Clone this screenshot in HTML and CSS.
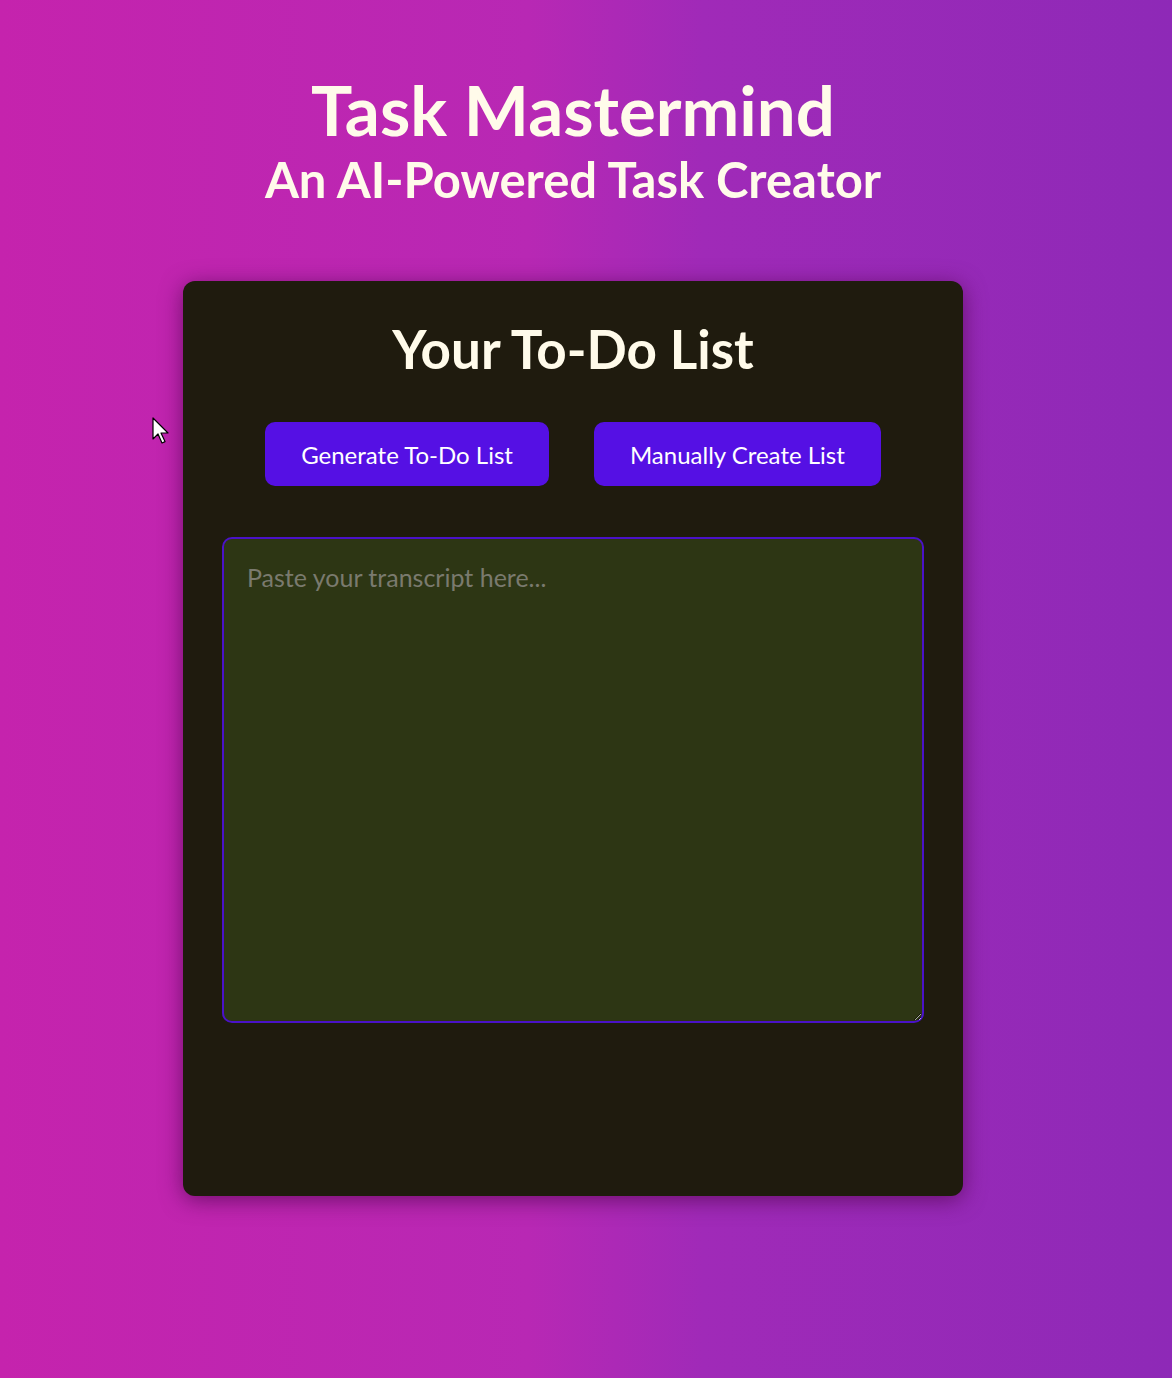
FILE: index.html
```html
<!DOCTYPE html>
<html lang="en">
<head>
    <meta charset="UTF-8">
    <meta name="viewport" content="width=device-width, initial-scale=1.0">
    <link rel="stylesheet" href="styles.css">
    <title>Task Mastermind</title>
</head>
<body>

    <header class="header">
        <h1>Task Mastermind</h1>
        <h2>An AI-Powered Task Creator</h2>
    </header>

    <div class="card">
        <h3>Your To-Do List</h3>

        <div class="actions">
            <button>Generate To-Do List</button>
            <button>Manually Create List</button>
        </div>

        <textarea placeholder="Paste your transcript here..."></textarea>
    </div>

    <svg class="cursor" width="18" height="28" viewBox="0 0 18 28">
        <path d="M1 1 L1 22 L6 17 L10 26 L13 24.6 L9 16 L16 16 Z" fill="#fff" stroke="#000" stroke-width="1.2" stroke-linejoin="round"/>
    </svg>

</body>
</html>
```

FILE: styles.css
```css
body {
    box-sizing: border-box;
    margin: 0;
    padding-right: 26px;
    min-height: 1378px;
    display: flex;
    flex-direction: column;
    align-items: center;
    font-family: 'Lato', 'DejaVu Sans', sans-serif;
    background: linear-gradient(90deg, #c523ad 0%, #b828b4 45%, #a02ab8 60%, #8e29b7 100%);
    color: #fff;
    position: relative;
}

.header {
    text-align: center;
    padding-top: 70px;
}

h1 {
    margin: 0;
    font-size: 69px;
    line-height: 80px;
    font-weight: 700;
    color: #fffbea;
}

h2 {
    margin: 0;
    font-size: 49px;
    line-height: 58px;
    font-weight: 700;
    color: #fffbea;
}

.card {
    box-sizing: border-box;
    width: 780px;
    height: 915px;
    margin-top: 73px;
    padding: 30px 40px;
    background: #1f1b0e;
    border-radius: 12px;
    box-shadow: 0 4px 22px rgba(90, 10, 90, 0.8);
}

h3 {
    margin: 0;
    text-align: center;
    font-size: 53px;
    line-height: 76px;
    font-weight: 700;
    color: #fffbea;
}

.actions {
    display: flex;
    justify-content: center;
    gap: 45px;
    margin-top: 35px;
}

button {
    height: 64px;
    padding: 0 36px;
    border: none;
    border-radius: 10px;
    background: #5510e4;
    color: #fff;
    font-family: inherit;
    font-size: 24px;
    cursor: pointer;
}

textarea {
    display: block;
    box-sizing: border-box;
    width: 702px;
    height: 486px;
    margin: 51px 0 0 -1px;
    padding: 23px 23px;
    background: #2d3614;
    border: 2px solid #4a12c8;
    border-radius: 10px;
    color: #ddd;
    font-family: inherit;
    font-size: 25px;
}

textarea::placeholder {
    color: #7a7a6e;
}

.cursor {
    position: absolute;
    left: 152px;
    top: 417px;
}
```
